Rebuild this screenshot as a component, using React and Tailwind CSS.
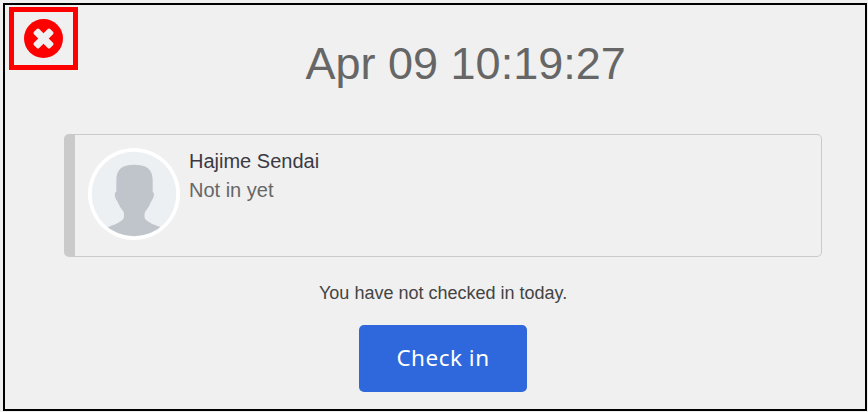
function CloseIcon() {
  return (
    <svg viewBox="0 0 116 116" className="block h-[39px] w-[39px]">
      <circle cx="58" cy="58" r="58" fill="#ff0000" />
      <g fill="#f0f0f0">
        <rect x="24" y="47" width="68" height="22" rx="5" transform="rotate(45 58 58)" />
        <rect x="24" y="47" width="68" height="22" rx="5" transform="rotate(-45 58 58)" />
      </g>
    </svg>
  );
}

function Avatar() {
  return (
    <svg viewBox="0 0 276 276" className="block h-[92px] w-[92px] shrink-0">
      <defs>
        <clipPath id="face">
          <circle cx="138" cy="138" r="127" />
        </clipPath>
      </defs>
      <circle cx="138" cy="138" r="138" fill="#fff" />
      <circle cx="138" cy="138" r="127" fill="#ecf0f3" />
      <path
        clipPath="url(#face)"
        fill="#c0c4cb"
        d="M139 50C101 50 85 64 85 98V130Q80 134 80 142Q82 153 88 160Q96 180 107 192Q110 207 105 214C96 224 76 232 58 238L40 276H240L220 238C201 232 182 225 172 214Q167 207 171 192Q182 180 190 160Q196 152 198 142Q198 134 194 130V98C194 64 177 50 139 50Z"
      />
    </svg>
  );
}

export default function App() {
  return (
    <div className="h-[412px] w-[868px] bg-[#f0f0f0] pt-[3px] pl-[3px] font-['Liberation_Sans',Arial,sans-serif]">
      <main className="flex h-[408px] w-[864px] flex-col border-2 border-black">
        <header className="flex h-[129px] items-start pt-[2px] pl-1">
          <button
            aria-label="Close"
            className="flex h-[63px] w-[69px] shrink-0 items-start border-[5px] border-[#ff0000] pt-[7px] pl-[10px]"
          >
            <CloseIcon />
          </button>
          <h1 className="mt-[31px] ml-[227.5px] text-[45px] leading-[52px] whitespace-nowrap text-[#666]">
            Apr 09 10:19:27
          </h1>
        </header>
        <section className="ml-[59px] flex h-[123px] w-[758px] gap-[9px] rounded-[5px] border border-l-[11px] border-[#cacaca] pt-[13px] pl-[13px]">
          <Avatar />
          <div className="text-xl leading-[29px]">
            <p className="-mt-[1px] text-[#3a3a42]">Hajime Sendai</p>
            <p className="text-[#666]">Not in yet</p>
          </div>
        </section>
        <section className="ml-[314px] flex w-[248px] flex-col pt-[25px]">
          <p className="text-[18px] leading-[22px] whitespace-nowrap text-[#444]">
            You have not checked in today.
          </p>
          <button className="mt-[21px] ml-10 h-[67px] w-[168px] rounded-[5px] bg-[#2f67dc] pb-[2px] font-['Noto_Sans','Open_Sans',sans-serif] text-[22.5px] tracking-[0.5px] text-white">
            Check in
          </button>
        </section>
      </main>
    </div>
  );
}
